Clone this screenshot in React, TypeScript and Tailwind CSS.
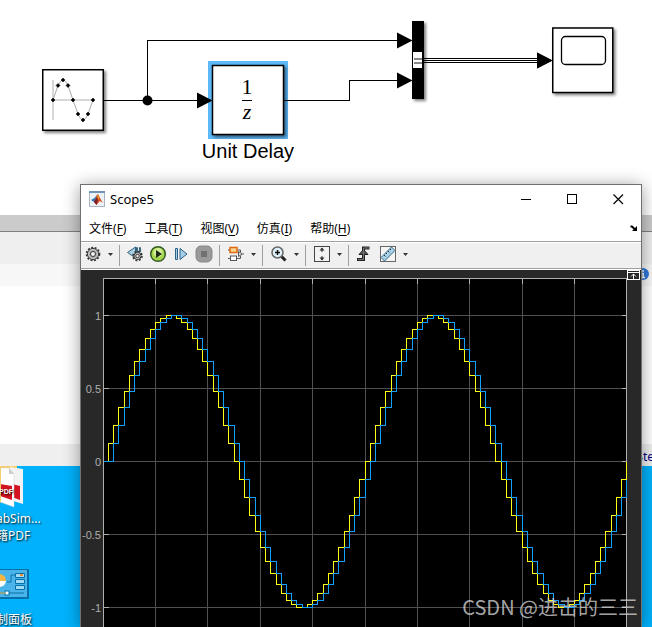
import type { ReactNode } from 'react';

const menus = [
  { label: '文件', key: 'F' },
  { label: '工具', key: 'T' },
  { label: '视图', key: 'V' },
  { label: '仿真', key: 'I' },
  { label: '帮助', key: 'H' },
];

const axisLabels = [
  { value: 1, text: '1' },
  { value: 0.5, text: '0.5' },
  { value: 0, text: '0' },
  { value: -0.5, text: '-0.5' },
  { value: -1, text: '-1' },
];

const SAMPLES = 100;
const LEFT = 22.5;
const TOP = 8.5;
const RIGHT = 545.5;
const BOTTOM = 360;

const plotX = (k: number) => Math.floor(22.25 + k * 5.236) + 0.5;
const plotY = (value: number) => 191.5 - Math.round(value * 146);

// zero-order hold: every sample keeps its level until the next one
function stairs(delay: number) {
  let path = `M${plotX(0)} ${plotY(0)}`;
  for (let k = 1; k <= SAMPLES; k += 1) {
    const value = Math.sin((2 * Math.PI * Math.max(0, k - delay)) / 50);
    path += `H${plotX(k)}V${plotY(value)}`;
  }
  return path;
}

function ModelDiagram() {
  return (
    <svg className="block h-[215px] w-full bg-white" role="img" aria-label="Unit Delay">
      <defs>
        <filter id="shadow" x="-20%" y="-20%" width="150%" height="150%">
          <feDropShadow dx="2" dy="2" stdDeviation="1.5" floodColor="#000" floodOpacity="0.5" />
        </filter>
      </defs>

      <rect x="208" y="61" width="80" height="78" fill="#5db8f8" />
      <g fill="none" stroke="#000" shapeRendering="crispEdges">
        <path d="M104 100.5H198M147.5 100V40.5H398M284 100.5H349.5V80.5H398" />
        <path d="M424 58.5H540M424 60.5H540M424 62.5H540" />
      </g>
      <circle cx="147.500" cy="100.500" r="5" />

      <rect x="42.750" y="69.750" width="60.500" height="60.500" fill="#fff" stroke="#000" strokeWidth="1.500" filter="url(#shadow)" />
      <path d="M53 80V120M53 100H94" fill="none" stroke="#ccc" strokeWidth="1.500" />
      <path d="M53 100L58 85.500Q63 74 68 85.500L73 100L78 114Q83 126 88 114L93 100" fill="none" stroke="#aaa" />
      <g>
        {[[53, 100], [58, 85.5], [63, 80], [68, 85.5], [73, 100], [78, 114], [83, 120], [88, 114], [93, 100]].map(([x, y]) => (
          <path key={x} d={`M${x - 2} ${y}L${x} ${y - 2}L${x + 2} ${y}L${x} ${y + 2}Z`} stroke="#000" strokeWidth="0.500" />
        ))}
      </g>

      <rect x="212.500" y="65.500" width="71" height="69" fill="#fff" stroke="#000" strokeWidth="1.500" filter="url(#shadow)" />
      <path d="M197 92.500L212.500 100.500L197 108.500ZM397 32.500L412.500 40.500L397 48.500ZM397 72.500L412.500 80.500L397 88.500ZM537 52.500L552.500 60.500L537 68.500Z" />
      <text x="247" y="94" textAnchor="middle" className="font-['Liberation_Serif',serif] text-[22px]">1</text>
      <path d="M242 100.5H252" stroke="#000" />
      <text x="247" y="119" textAnchor="middle" className="font-['Liberation_Serif',serif] text-[22px] italic">z</text>
      <text x="248" y="158" textAnchor="middle" className="font-['Liberation_Sans',sans-serif] text-[20px]">Unit Delay</text>

      <rect x="412" y="21" width="12" height="78" filter="url(#shadow)" />
      <rect x="413" y="52" width="9" height="16" fill="#fff" />
      <path d="M414 59H422M414 63H422" stroke="#888" strokeWidth="2" />

      <rect x="552.750" y="28" width="60" height="64.500" fill="#fff" stroke="#000" strokeWidth="1.500" filter="url(#shadow)" />
      <path d="M537 52.500L552.500 60.500L537 68.500Z" />
      <rect x="561.500" y="36.500" width="44" height="28" rx="4" fill="#fff" stroke="#000" strokeWidth="1.300" />
    </svg>
  );
}

function DesktopItem({ children, lines }: { children: ReactNode; lines: string[] }) {
  return (
    <div className="text-xs leading-[17px] text-white [text-shadow:1px_1px_2px_#000]">
      {children}
      <div className="-ml-1">
        {lines.map((line) => (
          <p key={line}>{line}</p>
        ))}
      </div>
    </div>
  );
}

function Desktop() {
  return (
    <div className="flex h-[161px] flex-col gap-[25px] overflow-hidden bg-[#00b2fc]">
      <DesktopItem lines={['abSim...', '籍PDF']}>
        <svg className="block h-11 w-6" viewBox="0 0 24 44">
          <path d="M0 0H17V8H0Z" fill="#f3cf70" />
          <path d="M10 1L23 3V38L10 34Z" fill="#f3f3f3" />
          <path d="M12 18L20 20V34L12 31Z" fill="#d3131f" />
          <path d="M0 2L9 2L14 8V41L0 36Z" fill="#fff" stroke="#ccc" strokeWidth="0.500" />
          <path d="M9 2V8H14Z" fill="#ccc" />
          <path d="M0 18L12 20V34L0 30Z" fill="#d3131f" />
          <path d="M0 0L1 2V37L0 36Z" fill="#f3cf70" />
          <text x="-1" y="28" className="font-['Liberation_Sans',sans-serif] text-[7px] font-bold" fill="#fff">PDF</text>
        </svg>
      </DesktopItem>
      <DesktopItem lines={['制面板']}>
        <svg className="mb-3 block h-[30px] w-[29px]" viewBox="0 0 29 30">
          <rect width="29" height="30" fill="#0870a8" />
          <rect width="27" height="27" y="1" fill="#48b4ea" />
          <path d="M0 5A7 7 0 0 1 6 12H0Z" fill="#f4b53f" />
          <path d="M0 12H6A7 7 0 0 1 0 18Z" fill="#fff" />
          <path d="M7 13H11V6H15M0 24H24" fill="none" stroke="#0870a8" />
          <path d="M15.500 4.500H24.500V8.500H15.500ZM15.500 10.500H24.500V14.500H15.500ZM15.500 16.500H24.500V20.500H15.500Z" fill="#9fdcf7" stroke="#0870a8" />
          <rect x="20" y="5" width="3" height="2" fill="#ef8c28" />
          <rect x="5" y="22" width="4" height="4" fill="#fff" stroke="#0870a8" />
          <path d="M0 24H5" stroke="#f4b53f" />
        </svg>
      </DesktopItem>
    </div>
  );
}

function MatlabLogo() {
  return (
    <svg className="size-4" viewBox="0 0 16 16">
      <rect x="0.500" y="0.500" width="15" height="15" fill="#edf2f7" stroke="#a9b5c2" />
      <path d="M0 1H16" stroke="#6f94ba" strokeWidth="2" />
      <path d="M2 9L5.500 7L8 4L7.500 9L5 11Z" fill="#2874b8" />
      <path d="M5 11L8 4L9 3L11 7L14 12L11 10L7.500 14Z" fill="#d7521e" />
      <path d="M5 11L8 6L9 9L7.500 14Z" fill="#79202b" />
      <path d="M9 3L10 7L9 9L8.500 5Z" fill="#f6a12b" />
    </svg>
  );
}

function ToolButton({ label, children }: { label: string; children: ReactNode }) {
  return (
    <button type="button" aria-label={label} className="size-4 shrink-0">
      <svg className="block size-4 overflow-visible" viewBox="0 0 16 16">
        {children}
      </svg>
    </button>
  );
}

function DropArrow({ label }: { label: string }) {
  return (
    <button type="button" aria-label={label} className="ml-[3px] grid h-4 w-3 shrink-0 place-items-center">
      <svg className="block h-[3px] w-[5px]" viewBox="0 0 5 3">
        <path d="M0 0H5L2.500 3Z" fill="#333" />
      </svg>
    </button>
  );
}

function Gear({ x, y, r }: { x: number; y: number; r: number }) {
  return (
    <g transform={`translate(${x} ${y})`}>
      <circle r={r - 1} fill="#aaa" stroke="#333" />
      <circle r={r} fill="none" stroke="#333" strokeWidth="1.600" strokeDasharray="2 1.500" />
      <circle r={r - 2} fill="none" stroke="#ccc" />
      <circle r={r / 2.6} fill="#f5f5f5" stroke="#333" />
    </g>
  );
}

function Toolbar() {
  return (
    <div role="toolbar" className="flex h-[25px] items-center bg-[#f0f0f0] [&>div]:flex [&>div]:h-[21px] [&>div]:items-center [&>div]:border-[#a0a0a0] [&>div]:pb-[3px]">
      <div className="border-r pr-[3px] pl-1">
        <ToolButton label="Configuration">
          <Gear x={8} y={8} r={6.5} />
        </ToolButton>
        <DropArrow label="Configuration menu" />
      </div>
      <div className="gap-[7px] border-r px-[7px]">
        <ToolButton label="Step back">
          <path d="M0.500 6.500L8.500 1V12Z" fill="#a8cee5" stroke="#38657f" />
          <path d="M9.500 1.500H10.500V6H9.500ZM12.500 1.500H13.500V6H12.500Z" fill="#a8cee5" stroke="#38657f" />
          <Gear x={10.5} y={10} r={4.5} />
        </ToolButton>
        <ToolButton label="Run">
          <circle cx="8" cy="8" r="7.300" fill="#a4d64c" stroke="#355b22" strokeWidth="1.500" />
          <circle cx="8" cy="6.500" r="4.500" fill="#e8f8b8" opacity="0.7" />
          <path d="M6 4V12L12 8Z" fill="#1d2a18" />
        </ToolButton>
        <ToolButton label="Step forward">
          <path d="M2.500 2.500H4.500V13.500H2.500ZM7 2.500L14 8L7 13.500Z" fill="#a8cee5" stroke="#2b6288" />
        </ToolButton>
        <ToolButton label="Stop">
          <rect width="16" height="16" rx="5" fill="#999" stroke="#888" />
          <rect x="5" y="5" width="6" height="6" fill="#707070" />
        </ToolButton>
      </div>
      <div className="border-r pr-[3px] pl-2">
        <ToolButton label="Highlight block">
          <path d="M0 4H12.500V6M0 12.500H12.500V10M15 8H16" fill="none" stroke="#555" />
          <rect x="2" y="1.500" width="7" height="5" fill="#fbd391" stroke="#e06b11" strokeWidth="1.500" />
          <rect x="2.500" y="10" width="6" height="4.500" fill="#fff" stroke="#555" />
          <path d="M10.500 5.500V10.500L14.500 8Z" fill="#ddd" stroke="#555" />
        </ToolButton>
        <DropArrow label="Highlight block menu" />
      </div>
      <div className="border-r pr-[3px] pl-2">
        <ToolButton label="Zoom in">
          <path d="M10 10L14.500 14.500" stroke="#222" strokeWidth="3" />
          <circle cx="6.500" cy="6.500" r="5.500" fill="#dff0fa" stroke="#666" strokeWidth="1.500" />
          <path d="M4 6.500H9M6.500 4V9" stroke="#111" strokeWidth="1.500" />
        </ToolButton>
        <DropArrow label="Zoom menu" />
      </div>
      <div className="border-r pr-[3px] pl-2">
        <ToolButton label="Scale axes">
          <rect x="0.500" y="0.500" width="15" height="15" fill="#f2f2f2" stroke="#444" />
          <path d="M8 2V6M8 10V14" stroke="#333" />
          <path d="M5.500 4.500L8 1.500L10.500 4.500ZM5.500 11.500L8 14.500L10.500 11.500Z" fill="#333" />
        </ToolButton>
        <DropArrow label="Scale axes menu" />
      </div>
      <div className="pl-2">
        <ToolButton label="Triggers">
          <path d="M0 13.500H6.500V2H12.500" fill="none" stroke="#222" strokeWidth="3" />
          <path d="M2 8.500L6.500 3.500L11 8.500Z" fill="#555" stroke="#222" />
          <path d="M1 13.500H6.500V2H12" fill="none" stroke="#777" />
        </ToolButton>
        <div className="ml-[7px] flex">
          <ToolButton label="Measurements">
            <rect x="0.500" y="0.500" width="15" height="15" fill="#f5f5f5" stroke="#666" />
            <path d="M1 11.500L11.500 1L15 4.500L4.500 15Z" fill="#a8d3ea" stroke="#38657f" />
            <path d="M4 9L5.500 10.500M6 7L7 8M8 5L9.500 6.500M10 3L11 4" stroke="#234" />
          </ToolButton>
          <DropArrow label="Measurements menu" />
        </div>
      </div>
    </div>
  );
}

function ScopePlot() {
  const columns = [1, 2, 3, 4, 5, 6, 7, 8, 9];

  return (
    <div className="relative min-h-0 flex-1 overflow-hidden bg-[#282828]">
      <svg className="block h-[357px] w-full" role="img" aria-label="Scope5">
        <rect x={LEFT} y={TOP} width={RIGHT - LEFT} height={BOTTOM} />
        <g fill="none" shapeRendering="crispEdges">
          {columns.map((column) => (
            <g key={column}>
              <path d={`M${plotX(column * 10)} ${TOP}V${BOTTOM}`} stroke="#505050" />
              <path d={`M${plotX(column * 10)} ${TOP}v5`} stroke="#afafaf" />
            </g>
          ))}
          {axisLabels.map(({ value }) => (
            <g key={value}>
              <path d={`M${LEFT} ${plotY(value)}H${RIGHT}`} stroke="#505050" />
              <path d={`M${LEFT} ${plotY(value)}h5M${RIGHT} ${plotY(value)}h-5`} stroke="#afafaf" />
            </g>
          ))}
          <rect x={LEFT} y={TOP} width={RIGHT - LEFT} height={BOTTOM} stroke="#afafaf" />
          <path d={stairs(0)} stroke="#ffff12" />
          <path d={stairs(1)} stroke="#139fff" />
        </g>
        <g className="font-['Liberation_Sans',sans-serif] text-[11px]" fill="#afafaf" textAnchor="end">
          {axisLabels.map(({ value, text }) => (
            <text key={value} x="20" y={plotY(value) + 4}>
              {text}
            </text>
          ))}
        </g>
      </svg>
      <button type="button" aria-label="Maximize axes" className="absolute top-0 right-[1px]">
        <svg className="block h-[11px] w-[13px]" viewBox="0 0 13 11">
          <rect x="0.500" y="0.500" width="12" height="9" fill="#282828" stroke="#fff" />
          <path d="M1 2.500H12M6.500 4V9M4 6.500L6.500 4L9 6.500" fill="none" stroke="#fff" />
        </svg>
      </button>
    </div>
  );
}

function ScopeWindow() {
  return (
    <section className="absolute top-[184px] right-[10px] bottom-0 left-20 flex flex-col border-x border-t border-[#707070] bg-white shadow-[0_2px_16px_rgba(0,0,0,0.4)]">
      <header className="flex h-[30px] items-center pb-0.5 pl-2">
        <MatlabLogo />
        <h1 className="ml-[5px] flex-1 text-[13px] leading-5">Scope5</h1>
        <button type="button" aria-label="Minimize" className="grid h-7 w-[46px] place-items-center">
          <svg className="size-[11px]" viewBox="0 0 11 11">
            <path d="M0 5.500H10" stroke="#000" />
          </svg>
        </button>
        <button type="button" aria-label="Maximize" className="grid h-7 w-[46px] place-items-center">
          <svg className="size-[11px]" viewBox="0 0 11 11">
            <rect x="0.500" y="0.500" width="9" height="9" fill="none" stroke="#000" />
          </svg>
        </button>
        <button type="button" aria-label="Close" className="grid h-7 w-[46px] place-items-center">
          <svg className="size-[11px]" viewBox="0 0 11 11">
            <path d="M0.500 0.500L10 10M10 0.500L0.500 10" stroke="#000" strokeWidth="1.200" />
          </svg>
        </button>
      </header>
      <nav className="flex h-[26px] items-center gap-[18px] pt-px pr-1 pl-2 text-xs leading-4">
        {menus.map((menu) => (
          <button key={menu.key} type="button" className="whitespace-nowrap">
            {menu.label}(<u className="underline-offset-2">{menu.key}</u>)
          </button>
        ))}
        <button type="button" aria-label="Dock" className="ml-auto">
          <svg className="block size-[7px]" viewBox="0 0 7 7">
            <path d="M0.500 1.500H2L5 4.500" fill="none" stroke="#000" strokeWidth="1.800" />
            <path d="M7 1V6H2Z" />
          </svg>
        </button>
      </nav>
      <div className="border-y border-[#a0a0a0] bg-white pt-px">
        <Toolbar />
      </div>
      <div className="h-px shrink-0 bg-white" />
      <ScopePlot />
    </section>
  );
}

export default function App() {
  return (
    <main className="relative min-h-screen overflow-hidden bg-[#00b2fc] font-['Noto_Sans','Noto_Sans_CJK_SC',sans-serif] text-black">
      <ModelDiagram />
      <div className="h-[17px] border-b border-[#808080] bg-[#cbcbcb]" />
      <div className="h-8 bg-[#efefef]" />
      <div className="flex h-[22px] items-center justify-end bg-[#f7f7f7] pr-[3px] pb-0.5">
        <svg className="size-3" viewBox="0 0 12 12">
          <circle cx="6" cy="6" r="6" fill="#2f78dc" />
          <path d="M6 2V4M4.500 5.500H6.200V9.500M4.500 9.500H8" fill="none" stroke="#fff" strokeWidth="1.500" />
        </svg>
      </div>
      <div className="h-[158px] bg-white" />
      <div className="flex h-[22px] items-center justify-end bg-[#efefef] pt-1 text-xs text-[#00008b]">
        <span className="-mr-0.5">Ste</span>
      </div>
      <Desktop />
      <ScopeWindow />
      <p className="absolute right-[14px] bottom-1 font-['Noto_Sans_CJK_SC',sans-serif] text-[20px] leading-8 whitespace-nowrap text-[#d0d0d0]/80">
        CSDN @进击的三三
      </p>
    </main>
  );
}
